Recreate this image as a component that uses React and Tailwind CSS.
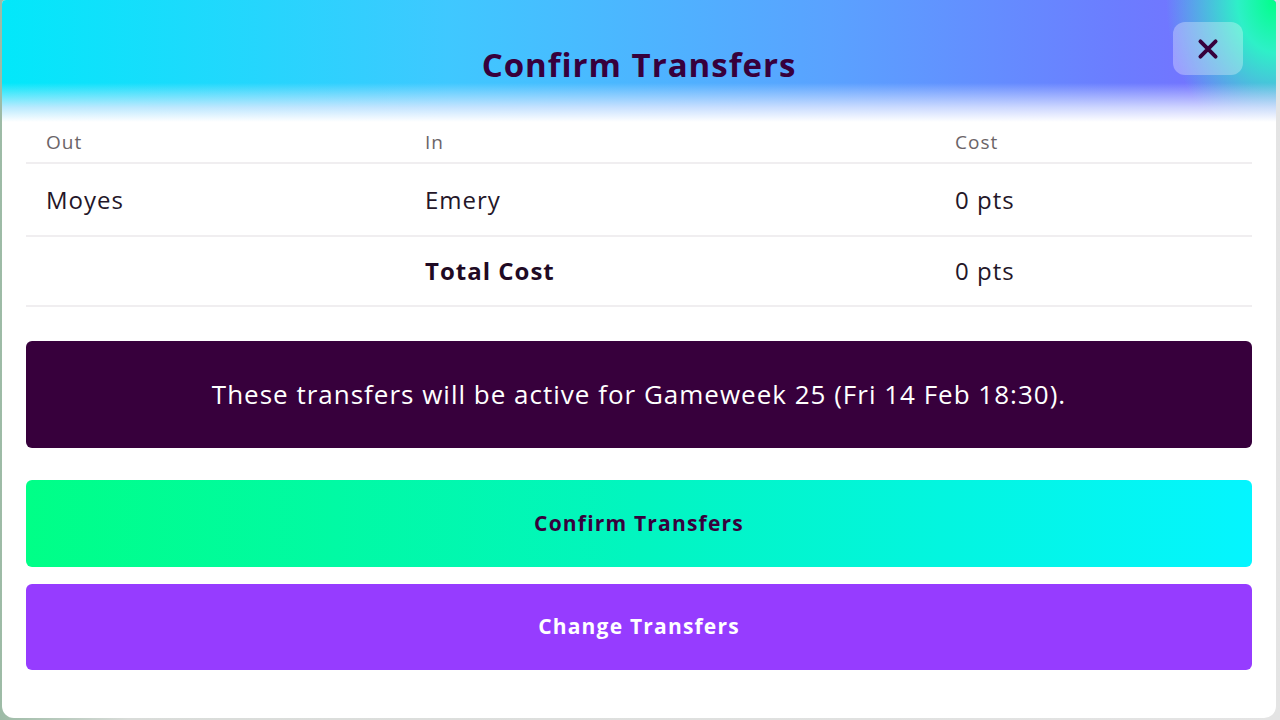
import React from "react";

const rows = [
  { out: "Moyes", in: "Emery", cost: "0 pts" },
];

const CloseIcon = () => (
  <svg width="26" height="26" viewBox="0 0 24 24" fill="none">
    <path
      d="M5 5L19 19M19 5L5 19"
      stroke="#37003c"
      strokeWidth="3.6"
      strokeLinecap="round"
    />
  </svg>
);

const App = () => {
  return (
    <div
      className="h-[720px] w-[1280px] bg-[linear-gradient(to_right,#9dbba6,#d9dcd9_10%,#e4e4e4)] pl-[2px] pr-[4px] pb-[2px]"
      style={{ fontFamily: "'Open Sans', Lato, sans-serif" }}
    >
      <div className="flex h-full flex-col overflow-hidden rounded-b-xl rounded-t-sm bg-white">
        {/* Header */}
        <div className="relative h-[122px] shrink-0 bg-[linear-gradient(to_right,#02e8fa,#3fc8ff_35%,#5aa2ff_65%,#6c7cff_88%,#7a6cff)]">
          <div className="absolute inset-0 bg-[radial-gradient(ellipse_110px_150px_at_100%_0%,#00ff87_0%,#2ef0c8_35%,rgba(120,100,255,0)_100%)]" />
          <div className="absolute inset-0 bg-[linear-gradient(to_bottom,rgba(255,255,255,0)_0%,rgba(255,255,255,0)_68%,rgba(230,235,255,0.8)_88%,#ffffff_100%)]" />
          <div className="relative flex h-full items-start justify-center pt-[44px]">
            <h1 className="text-[33px] leading-[42px] font-bold tracking-[1px] text-[#37003c]">
              Confirm Transfers
            </h1>
          </div>
          <button className="absolute right-[33px] top-[22px] flex h-[53px] w-[70px] items-center justify-center rounded-xl bg-white/30">
            <CloseIcon />
          </button>
        </div>

        <div className="flex flex-1 flex-col px-[24px]">
          {/* Table */}
          <div className="grid grid-cols-[379px_530px_1fr] text-[#241628]">
            <div className="flex h-[42px] items-center border-b-2 border-[#f0eef0] pl-[20px] text-[19px] tracking-[1px] text-[#6b6468]">
              Out
            </div>
            <div className="flex h-[42px] items-center border-b-2 border-[#f0eef0] pl-[20px] text-[19px] tracking-[1px] text-[#6b6468]">
              In
            </div>
            <div className="flex h-[42px] items-center border-b-2 border-[#f0eef0] pl-[20px] text-[19px] tracking-[1px] text-[#6b6468]">
              Cost
            </div>

            {rows.map((r) => (
              <React.Fragment key={r.out}>
                <div className="flex h-[73px] items-center border-b-2 border-[#f0eef0] pl-[20px] text-[24px] tracking-[1px]">
                  {r.out}
                </div>
                <div className="flex h-[73px] items-center border-b-2 border-[#f0eef0] pl-[20px] text-[24px] tracking-[1px]">
                  {r.in}
                </div>
                <div className="flex h-[73px] items-center border-b-2 border-[#f0eef0] pl-[20px] text-[24px] tracking-[1px]">
                  {r.cost}
                </div>
              </React.Fragment>
            ))}

            <div className="h-[70px] border-b-2 border-[#f0eef0]" />
            <div className="flex h-[70px] items-center border-b-2 border-[#f0eef0] pl-[20px] text-[24px] font-bold tracking-[1px] text-[#1f0a24]">
              Total Cost
            </div>
            <div className="flex h-[70px] items-center border-b-2 border-[#f0eef0] pl-[20px] text-[24px] tracking-[1px]">
              0 pts
            </div>
          </div>

          {/* Info */}
          <div className="mt-[34px] flex h-[107px] items-center justify-center rounded-md bg-[#37003c] text-[26px] tracking-[1px] text-white">
            These transfers will be active for Gameweek 25 (Fri 14 Feb 18:30).
          </div>

          {/* Actions */}
          <button className="mt-[32px] flex h-[87px] items-center justify-center rounded-md bg-[linear-gradient(to_right,#00ff87,#02f5c0_50%,#04f5ff)] text-[21px] font-bold tracking-[1.2px] text-[#37003c]">
            Confirm Transfers
          </button>
          <button className="mt-[17px] flex h-[86px] items-center justify-center rounded-md bg-[#963cff] text-[21px] font-bold tracking-[1.2px] text-white">
            Change Transfers
          </button>
        </div>
      </div>
    </div>
  );
};

export default App;
